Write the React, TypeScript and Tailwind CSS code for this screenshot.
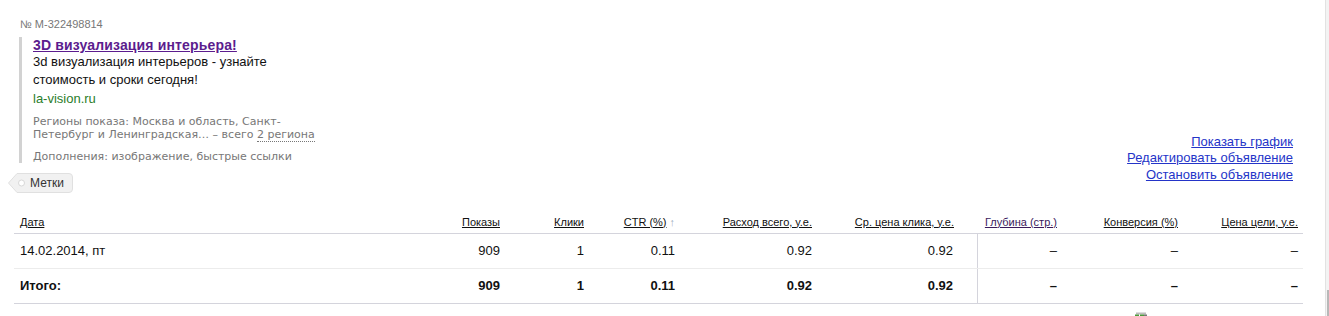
import React from "react";

const cols = [
  "w-[406px] pl-[6px] text-left",
  "w-[80px] text-right",
  "w-[84px] text-right",
  "w-[91px] text-right",
  "w-[137px] text-right",
  "w-[166px] text-right pr-[24px] border-r border-[#d4d4dc]",
  "w-[79px] text-right",
  "w-[121px] text-right",
  "w-[125px] text-right pr-[5px]",
];

function Tag() {
  return (
    <div className="relative ml-[8px] mt-[10px] h-[20px] w-[65px]">
      <svg className="absolute inset-0" width="65" height="20" viewBox="0 0 65 20">
        <path d="M0.5 10 L9 0.5 H61 Q64.5 0.5 64.5 4 V16 Q64.5 19.5 61 19.5 H9 Z" fill="#f1f1f1" stroke="#e0e0e0" />
        <circle cx="13.5" cy="10" r="3" fill="#fff" stroke="#d8d8d8" />
      </svg>
      <span className="relative block pl-[22px] text-[12px] leading-[20px] text-[#333]" style={{ fontFamily: '"Liberation Sans", Arial, sans-serif' }}>
        Метки
      </span>
    </div>
  );
}

function HeadCell({ i, children, className = "" }: { i: number; children: React.ReactNode; className?: string }) {
  return <div className={`${cols[i]} shrink-0`}><span className={`underline ${className}`}>{children}</span></div>;
}

function Row({ values, bold, border }: { values: string[]; bold?: boolean; border: string }) {
  return (
    <div className={`flex h-[35px] items-stretch ${border} text-[13px] ${bold ? "font-bold" : ""} text-[#111]`}>
      {values.map((v, i) => (
        <div key={i} className={`${cols[i]} shrink-0 flex items-center ${i === 0 ? "justify-start" : "justify-end"}`}>
          {v}
        </div>
      ))}
    </div>
  );
}

export default function App() {
  return (
    <div className="flex h-[316px] w-[1329px] overflow-hidden bg-white" style={{ fontFamily: '"Liberation Sans", Arial, sans-serif' }}>
      <div className="flex-1 pt-[18px]">
        <div className="flex items-end justify-between">
          <div className="flex flex-col">
            <div className="ml-[20px] text-[11px] leading-[13px] text-[#777]">№ М-322498814</div>
            <div className="ml-[19px] mt-[6px] border-l-[3px] border-[#d2d2d2] pl-[11px]">
              <div className="text-[14px] font-bold leading-[16px] tracking-[0.15px] text-[#5b1c8e] underline">3D визуализация интерьера!</div>
              <div className="text-[13px] leading-[18px] text-[#111]">
                3d визуализация интерьеров - узнайте
                <br />
                стоимость и сроки сегодня!
              </div>
              <div className="text-[13px] leading-[20px] text-[#2a7d2a]">la-vision.ru</div>
              <div className="mt-[6px] text-[11px] leading-[13px] text-[#777]" style={{ fontFamily: '"DejaVu Sans", Verdana, sans-serif' }}>
                Регионы показа: Москва и область, Санкт-
                <br />
                Петербург и Ленинградская… – всего{" "}
                <span className="border-b border-dotted border-[#777]">2 региона</span>
              </div>
              <div className="mt-[9px] text-[11px] leading-[13px] text-[#777]" style={{ fontFamily: '"DejaVu Sans", Verdana, sans-serif' }}>
                Дополнения: изображение, быстрые ссылки
              </div>
            </div>
            <Tag />
          </div>
          <div className="flex flex-col items-end pb-[10px] pr-[32px] text-[13px] leading-[16.5px] text-[#2434c8]">
            <span className="underline">Показать график</span>
            <span className="underline">Редактировать объявление</span>
            <span className="underline">Остановить объявление</span>
          </div>
        </div>

        <div className="ml-[14px] mt-[18px] w-[1289px]">
          <div className="flex h-[23px] items-center border-b border-[#d4d4dc] text-[11px] text-[#111]">
            <HeadCell i={0}>Дата</HeadCell>
            <HeadCell i={1}>Показы</HeadCell>
            <HeadCell i={2}>Клики</HeadCell>
            <div className={`${cols[3]} shrink-0`}>
              <span className="underline">CTR (%)</span>
              <span className="ml-[3px] text-[#9fb0c0]">↑</span>
            </div>
            <HeadCell i={4}>Расход всего, у.е.</HeadCell>
            <div className={`w-[166px] shrink-0 pr-[24px] text-right`}><span className="underline">Ср. цена клика, у.е.</span></div>
            <HeadCell i={6} className="text-[#3a1a5c]">Глубина (стр.)</HeadCell>
            <HeadCell i={7}>Конверсия (%)</HeadCell>
            <HeadCell i={8}>Цена цели, у.е.</HeadCell>
          </div>
          <Row values={["14.02.2014, пт", "909", "1", "0.11", "0.92", "0.92", "–", "–", "–"]} border="border-b border-[#ececec]" />
          <Row values={["Итого:", "909", "1", "0.11", "0.92", "0.92", "–", "–", "–"]} bold border="border-b border-[#d4d4dc]" />
        </div>

        <div className="mt-[8px] flex justify-end pr-[177px]">
          <svg width="14" height="14" viewBox="0 0 14 14">
            <rect x="2" y="0.5" width="10" height="2" fill="#bbb" />
            <rect x="1" y="2.5" width="4" height="3" fill="#4a9a3a" />
            <rect x="6" y="2.5" width="4" height="3" fill="#4a9a3a" />
            <rect x="10" y="2.5" width="3" height="3" fill="#777" />
          </svg>
        </div>
      </div>
      <div className="relative w-[4px] shrink-0 border-l border-[#e2e2e2] bg-[#f3f3f3]">
        <div className="absolute bottom-0 right-0 h-[26px] w-[2px] bg-[#b8b8b8]" />
      </div>
    </div>
  );
}
